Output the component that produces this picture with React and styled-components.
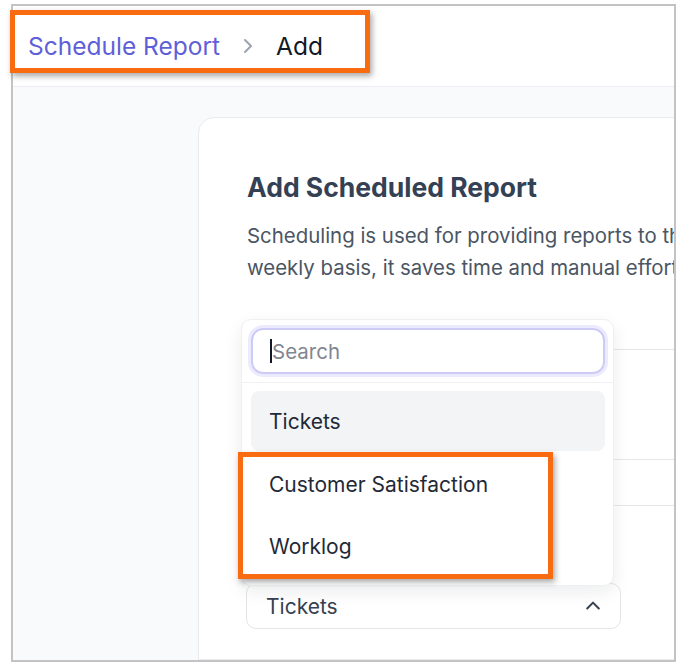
import React from 'react';
import styled, { createGlobalStyle } from 'styled-components';

const GlobalStyle = createGlobalStyle`
  html, body {
    margin: 0;
    padding: 0;
    background: #ffffff;
  }
  body {
    font-family: Inter, "Noto Sans", "Liberation Sans", sans-serif;
  }
`;

const Page = styled.div`
  position: relative;
  width: 677px;
  height: 663px;
  padding: 4px 1px 1px 11px;
  box-sizing: border-box;
  overflow: hidden;
`;

const Frame = styled.div`
  width: 100%;
  height: 100%;
  border: 2px solid #c3c3c3;
  box-sizing: border-box;
  overflow: hidden;
  display: flex;
  flex-direction: column;
  background: #f9fafb;
`;

const Header = styled.header`
  height: 80px;
  flex-shrink: 0;
  background: #ffffff;
  border-bottom: 1px solid #eceef2;
  display: flex;
  align-items: center;
  justify-content: space-between;
  padding-left: 15px;
`;

const Crumbs = styled.nav`
  display: flex;
  align-items: center;
  font-size: 24.5px;
  line-height: 32px;
  white-space: nowrap;
`;

const CrumbLink = styled.span`
  color: #5f5fd8;
`;

const CrumbSep = styled.span`
  display: flex;
  margin: 0 22px 0 22px;
  color: #9ca3af;
`;

const CrumbCurrent = styled.span`
  color: #111827;
`;

const HeaderButton = styled.div`
  width: 120px;
  height: 38px;
  border: 1px solid #e3e5e8;
  border-radius: 8px;
  margin-right: -122px;
  flex-shrink: 0;
`;

const Main = styled.main`
  flex: 1;
  padding: 30px 0 0 185px;
  overflow: hidden;
`;

const Card = styled.section`
  width: 640px;
  height: 100%;
  background: #ffffff;
  border: 1px solid #e9ebef;
  border-radius: 16px 0 0 0;
  box-sizing: border-box;
  padding: 53px 0 0 48px;
`;

const Title = styled.h1`
  margin: 0;
  font-size: 26.5px;
  line-height: 32px;
  font-weight: 700;
  color: #344054;
  white-space: nowrap;
`;

const Description = styled.p`
  margin: 17px 0 0;
  font-size: 20.4px;
  line-height: 32px;
  color: #4b5563;
  white-space: nowrap;
`;

const Rows = styled.div`
  margin-top: 65px;
  width: 560px;
  display: flex;
  flex-direction: column;
`;

const Row = styled.div`
  height: ${p => p.$h}px;
  border-top: 1px solid #e5e7eb;
  border-bottom: ${p => (p.$last ? '1px solid #e5e7eb' : 'none')};
  box-sizing: border-box;
`;

const SelectWrap = styled.div`
  position: relative;
  margin: 77px 0 0 -1px;
  width: 375px;
`;

const Trigger = styled.div`
  height: 46px;
  border: 1px solid #e3e5e8;
  border-radius: 10px;
  box-sizing: border-box;
  display: flex;
  align-items: center;
  justify-content: space-between;
  padding: 0 17px 0 19px;
  font-size: 21px;
  color: #374151;
`;

const Menu = styled.div`
  position: absolute;
  left: -5px;
  bottom: calc(100% - 3px);
  width: 373px;
  background: #ffffff;
  border: 1px solid #eef0f2;
  border-radius: 10px;
  box-shadow: 0 6px 18px rgba(17, 24, 39, 0.08);
  box-sizing: border-box;
  z-index: 2;
`;

const SearchArea = styled.div`
  padding: 8px 8px 8px 9px;
  border-bottom: 1px solid #f0f1f3;
`;

const SearchField = styled.div`
  height: 46px;
  border: 2px solid #cdcaf6;
  box-shadow: 0 0 0 3px #eceafd;
  border-radius: 12px;
  box-sizing: border-box;
  display: flex;
  align-items: center;
  padding-left: 17px;
  font-size: 20.5px;
  color: #81868f;
`;

const Caret = styled.span`
  width: 2px;
  height: 24px;
  background: #111827;
`;

const OptionList = styled.div`
  padding: 8px 8px 8px 9px;
`;

const Option = styled.div`
  height: ${p => (p.$active ? 60 : 62)}px;
  margin-bottom: ${p => (p.$active ? 2 : 0)}px;
  display: flex;
  align-items: center;
  padding-left: 18px;
  border-radius: 8px;
  background: ${p => (p.$active ? '#f3f4f6' : 'transparent')};
  font-size: 21px;
  color: #1f2937;
  white-space: nowrap;
`;

const Callout = styled.div`
  position: absolute;
  left: ${p => p.$x}px;
  top: ${p => p.$y}px;
  width: ${p => p.$w}px;
  height: ${p => p.$h}px;
  border: 5px solid #f96b10;
  box-sizing: border-box;
  box-shadow: 2px 3px 6px rgba(0, 0, 0, 0.35);
  pointer-events: none;
  z-index: 5;
`;

const SepIcon = () => (
  <svg width="12" height="18" viewBox="0 0 12 18" fill="none"
    stroke="currentColor" strokeWidth="2" strokeLinecap="round" strokeLinejoin="round">
    <path d="M3 3l6 6-6 6" />
  </svg>
);

const ChevronUp = () => (
  <svg width="20" height="20" viewBox="0 0 24 24" fill="none"
    stroke="currentColor" strokeWidth="2.4" strokeLinecap="round" strokeLinejoin="round">
    <path d="M5 15l7-7 7 7" />
  </svg>
);

export default function App() {
  return (
    <>
      <GlobalStyle />
      <Page>
        <Frame>
          <Header>
            <Crumbs>
              <CrumbLink>Schedule Report</CrumbLink>
              <CrumbSep><SepIcon /></CrumbSep>
              <CrumbCurrent>Add</CrumbCurrent>
            </Crumbs>
            <HeaderButton />
          </Header>
          <Main>
            <Card>
              <Title>Add Scheduled Report</Title>
              <Description>
                Scheduling is used for providing reports to the users on a daily or
                <br />
                weekly basis, it saves time and manual effort.
              </Description>
              <Rows>
                <Row $h={110} />
                <Row $h={47} $last />
              </Rows>
              <SelectWrap>
                <Menu>
                  <SearchArea>
                    <SearchField>
                      <Caret />
                      Search
                    </SearchField>
                  </SearchArea>
                  <OptionList>
                    <Option $active>Tickets</Option>
                    <Option>Customer Satisfaction</Option>
                    <Option>Worklog</Option>
                  </OptionList>
                </Menu>
                <Trigger>
                  Tickets
                  <ChevronUp />
                </Trigger>
              </SelectWrap>
            </Card>
          </Main>
        </Frame>
        <Callout $x={10} $y={10} $w={360} $h={63} />
        <Callout $x={238} $y={452} $w={315} $h={127} />
      </Page>
    </>
  );
}
